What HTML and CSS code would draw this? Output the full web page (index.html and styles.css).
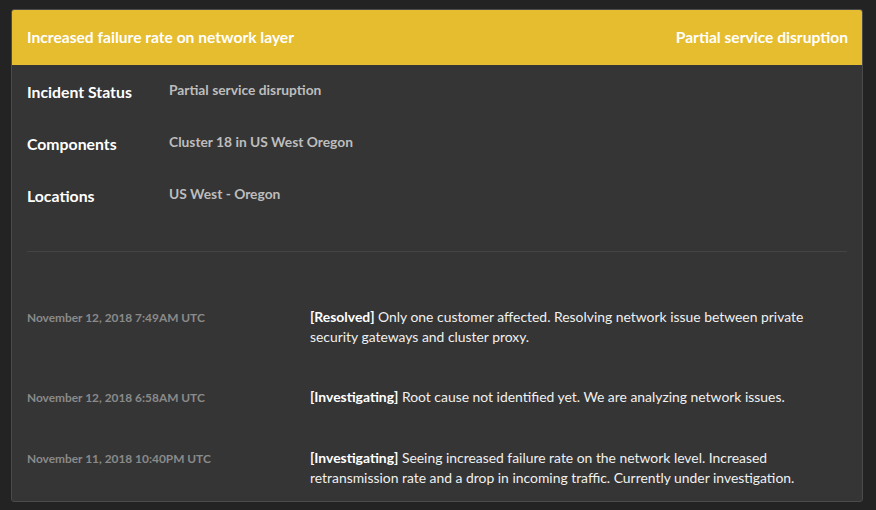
FILE: index.html
```html
<!DOCTYPE html>
<html lang="en">
<head>
<meta charset="utf-8">
<title>Incident</title>
<link rel="stylesheet" href="styles.css">
</head>
<body>
<div class="card">
  <div class="card-header">
    <span class="title">Increased failure rate on network layer</span>
    <span class="status">Partial service disruption</span>
  </div>
  <div class="details">
    <div class="detail-row">
      <div class="label">Incident Status</div>
      <div class="value">Partial service disruption</div>
    </div>
    <div class="detail-row">
      <div class="label">Components</div>
      <div class="value">Cluster 18 in US West Oregon</div>
    </div>
    <div class="detail-row">
      <div class="label">Locations</div>
      <div class="value">US West - Oregon</div>
    </div>
  </div>
  <hr class="divider">
  <div class="updates">
    <div class="update">
      <div class="date">November 12, 2018 7:49AM UTC</div>
      <div class="message"><b>[Resolved]</b> Only one customer affected. Resolving network issue between private security gateways and cluster proxy.</div>
    </div>
    <div class="update">
      <div class="date">November 12, 2018 6:58AM UTC</div>
      <div class="message"><b>[Investigating]</b> Root cause not identified yet. We are analyzing network issues.</div>
    </div>
    <div class="update">
      <div class="date">November 11, 2018 10:40PM UTC</div>
      <div class="message"><b>[Investigating]</b> Seeing increased failure rate on the network level. Increased retransmission rate and a drop in incoming traffic. Currently under investigation.</div>
    </div>
  </div>
</div>
</body>
</html>
```

FILE: styles.css
```css
* { box-sizing: border-box; }
html, body { margin: 0; padding: 0; }
body {
  background: #232323;
  font-family: Lato, "Open Sans", sans-serif;
  padding: 9px 13px 0 11px;
}
.card {
  width: 852px;
  height: 493px;
  background: #353535;
  border: 1px solid #4b4b4b;
  border-radius: 3px;
  overflow: hidden;
}
.card-header {
  height: 56px;
  margin: -1px -1px 0;
  background: #e6bd2f;
  color: #fff;
  font-size: 15.6px;
  font-weight: 700;
  display: flex;
  justify-content: space-between;
  align-items: center;
  padding: 0 15px 1px 16px;
}
.details {
  padding: 16px 15px 0;
  display: flex;
  flex-direction: column;
  gap: 31px;
}
.detail-row {
  display: grid;
  grid-template-columns: 142px 1fr;
  line-height: 20px;
  align-items: center;
}
.label {
  color: #fff;
  font-size: 15.8px;
  font-weight: 700;
  padding-top: 1px;
}
.value {
  color: #bdbdbd;
  font-size: 13.8px;
  font-weight: 700;
  margin-top: -3px;
}
.divider {
  border: 0;
  border-top: 1px solid #444;
  margin: 45px 15px 0;
}
.updates {
  padding: 55px 15px 0;
  display: flex;
  flex-direction: column;
  gap: 40px;
}
.update {
  display: grid;
  grid-template-columns: 283px 1fr;
  line-height: 20px;
}
.date {
  color: #8a8a8a;
  font-size: 11.9px;
  font-weight: 700;
  padding-top: 1px;
}
.message {
  color: #f0f0f0;
  font-size: 13.9px;
}
.message b { font-weight: 700; color: #fff; }
```
